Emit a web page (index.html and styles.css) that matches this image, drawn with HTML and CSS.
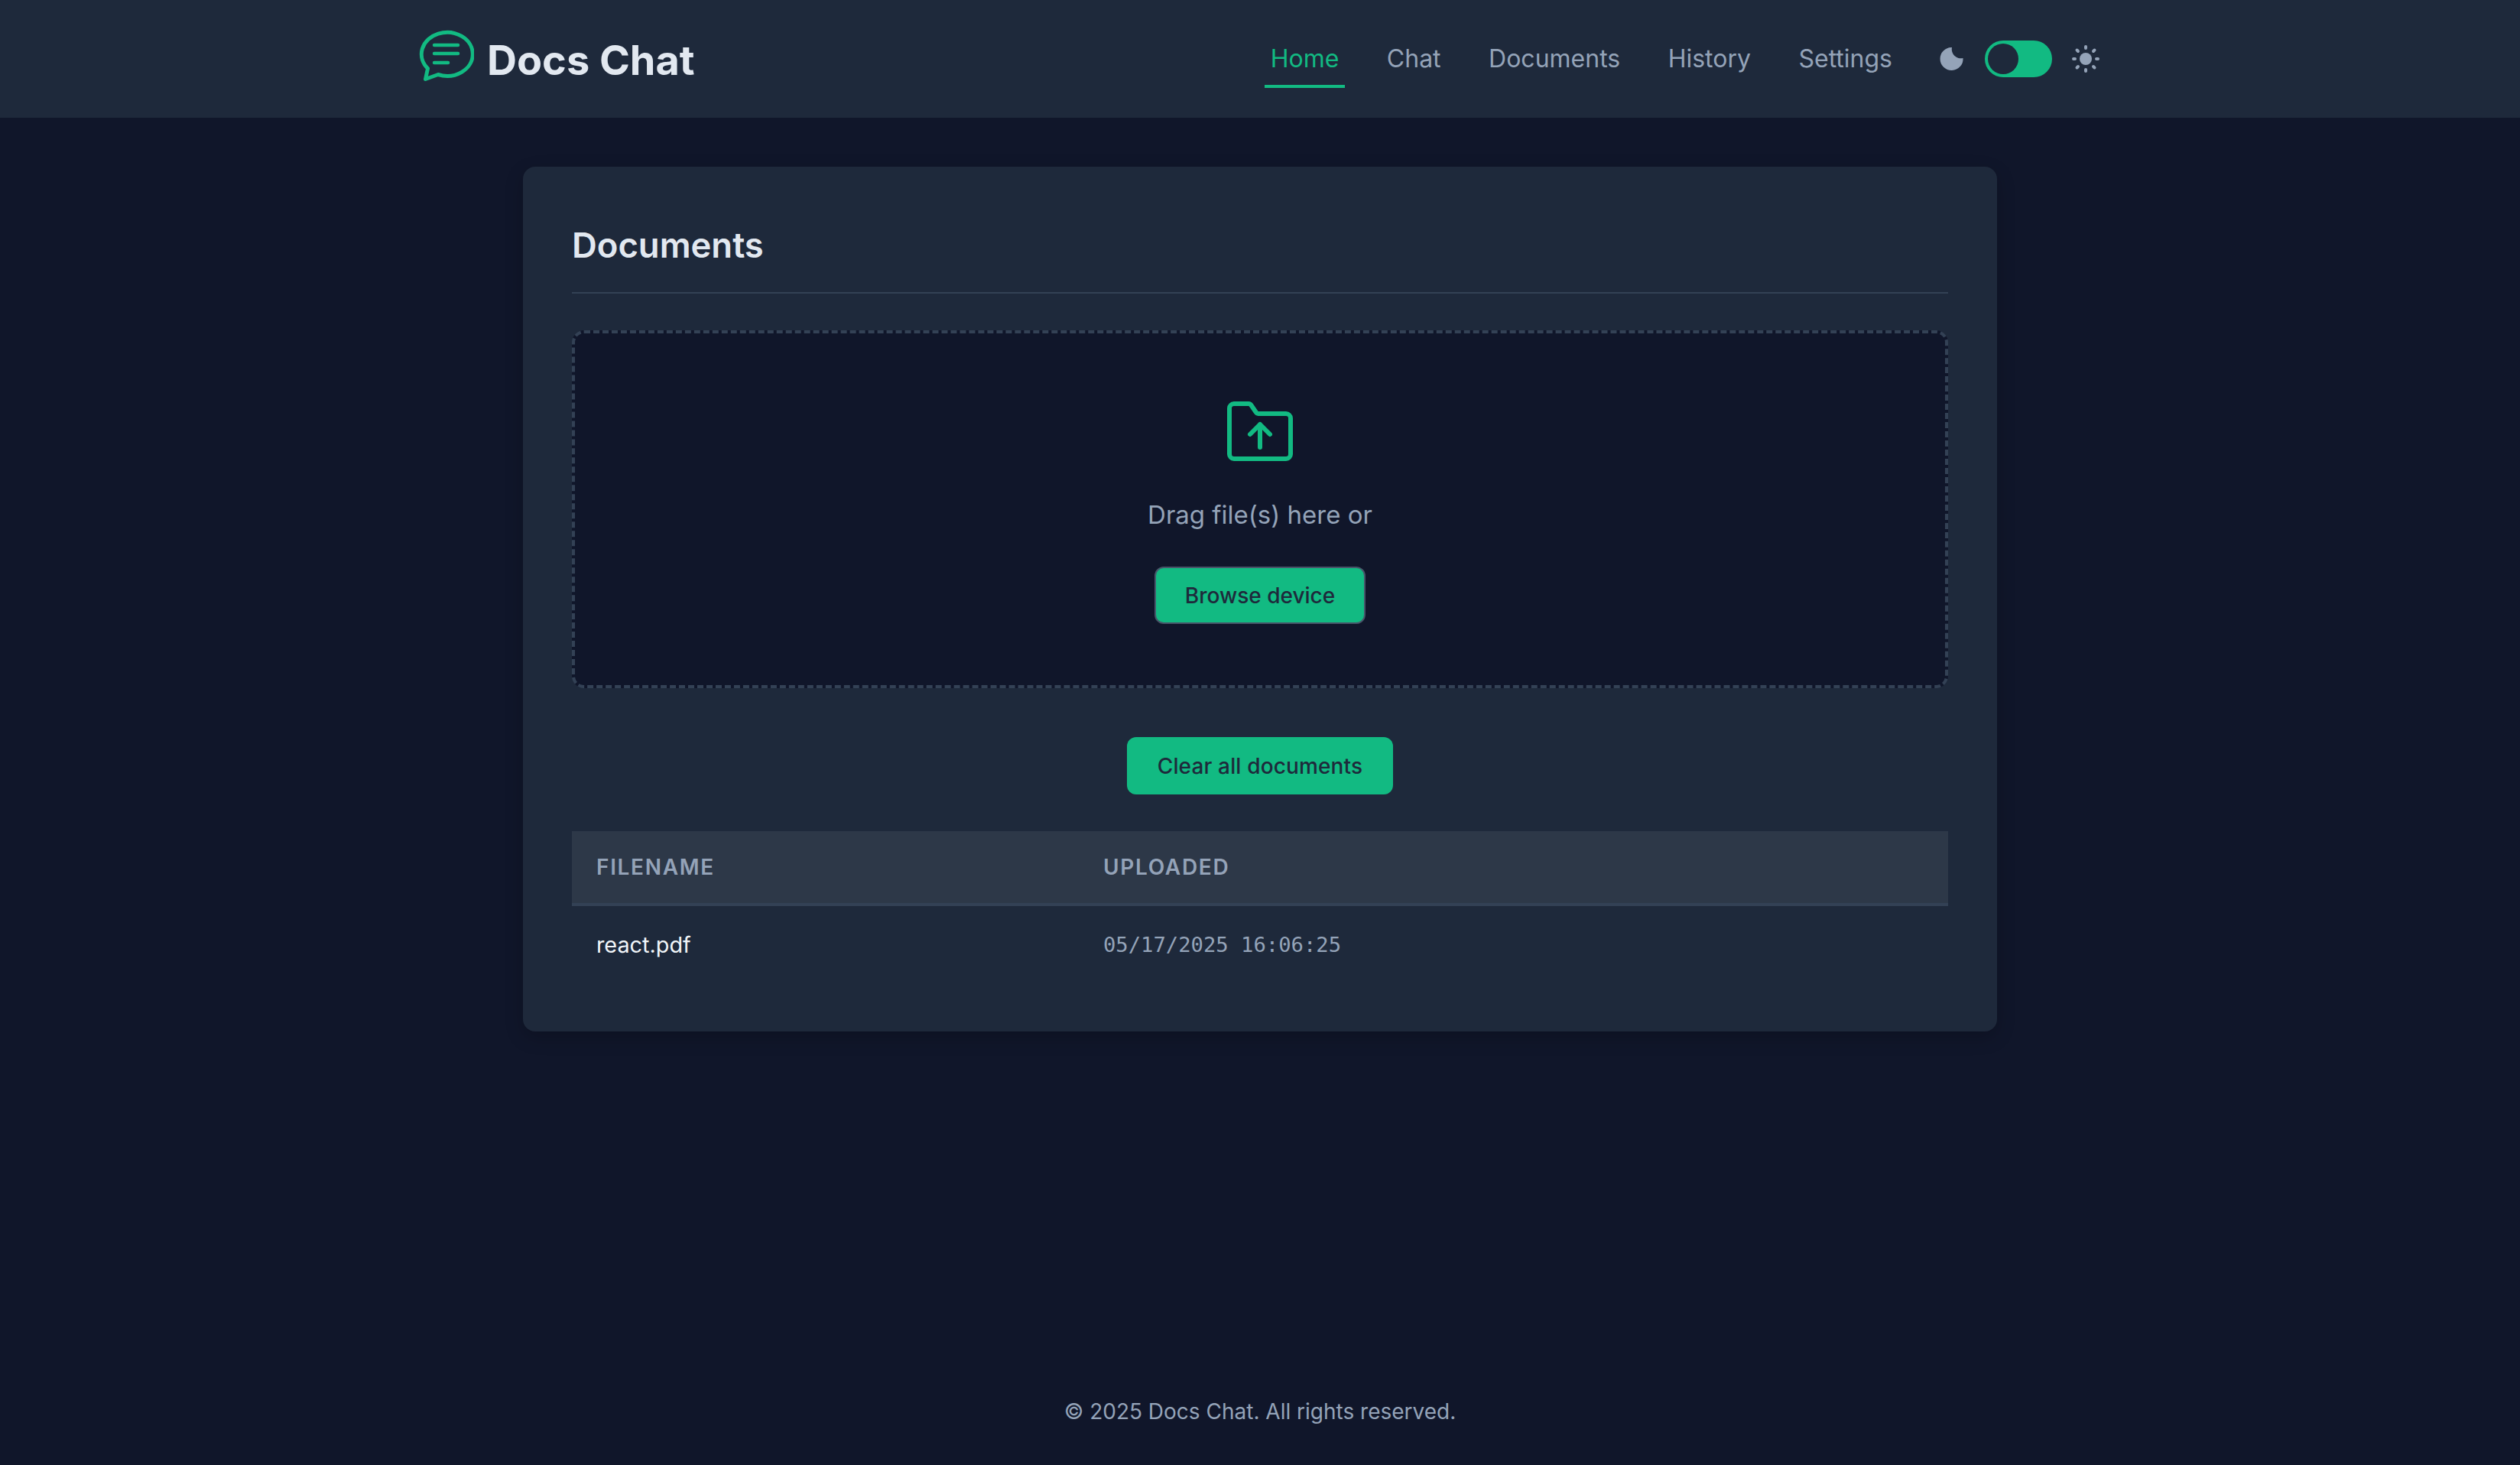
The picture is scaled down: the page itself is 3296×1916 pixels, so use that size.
FILE: index.html
```html
<!DOCTYPE html>
<html lang="en">
<head>
<meta charset="utf-8">
<title>Docs Chat</title>
<link rel="stylesheet" href="styles.css">
</head>
<body>
<header class="topbar">
  <div class="topbar-inner">
    <a class="brand" href="#">
      <svg class="brand-icon" width="72" height="68" viewBox="0 0 72 68" fill="none" stroke="#12ba82" stroke-linecap="round" stroke-linejoin="round">
        <path stroke-width="5" d="M25 58.5A33.5 28.5 0 1 0 11.5 50.5L8.5 64.5Z"/>
        <path stroke-width="4.5" d="M20 20H51M20 31H51M20 43H38"/>
      </svg>
      <span class="brand-name">Docs Chat</span>
    </a>
    <div class="topbar-right">
      <nav class="nav">
        <a class="nav-link active" href="#">Home</a>
        <a class="nav-link" href="#">Chat</a>
        <a class="nav-link" href="#">Documents</a>
        <a class="nav-link" href="#">History</a>
        <a class="nav-link" href="#">Settings</a>
      </nav>
      <div class="theme">
        <svg width="31" height="30" viewBox="0 0 31 30" fill="#94a3b8"><path d="M16 0A15 15 0 1 0 30.5 14A12 12 0 0 1 16 0Z"/></svg>
        <span class="switch"><span class="knob"></span></span>
        <svg class="sun" width="36" height="36" viewBox="-18 -18 36 36" fill="#94a3b8" stroke="#94a3b8" stroke-width="4" stroke-linecap="round">
          <circle r="8" stroke="none"/>
          <path d="M0-16V-14M0 14V16M-16 0H-14M14 0H16M-11.500-11.500L-10-10M10 10L11.500 11.500M-11.500 11.500L-10 10M10-10L11.500-11.500"/>
        </svg>
      </div>
    </div>
  </div>
</header>
<main class="main">
  <section class="card">
    <h1 class="card-title">Documents</h1>
    <div class="dropzone">
      <svg width="86" height="78" viewBox="0 0 86 78" fill="none" stroke="#12ba82" stroke-width="6" stroke-linecap="round" stroke-linejoin="round">
        <path d="M3 9a6 6 0 0 1 6-6H28a4 4 0 0 1 3.500 2L38 14.500a3 3 0 0 0 2.500 1.500H77a6 6 0 0 1 6 6V69a6 6 0 0 1-6 6H9a6 6 0 0 1-6-6Z"/>
        <path d="M43 60V30M30 43L43 30L56 43"/>
      </svg>
      <p class="drop-text">Drag file(s) here or</p>
      <button class="btn btn-outlined">Browse device</button>
    </div>
    <div class="actions"><button class="btn btn-clear">Clear all documents</button></div>
    <table class="files">
      <thead>
        <tr><th class="col-name">Filename</th><th>Uploaded</th></tr>
      </thead>
      <tbody>
        <tr><td class="file-name">react.pdf</td><td class="file-date">05/17/2025 16:06:25</td></tr>
      </tbody>
    </table>
  </section>
</main>
<footer class="footer">© 2025 Docs Chat. All rights reserved.</footer>
</body>
</html>
```
FILE: styles.css
```css
* { box-sizing: border-box; }
html, body { margin: 0; padding: 0; }
body {
  min-height: 100vh;
  display: flex;
  flex-direction: column;
  background: #10162a;
  color: #e2e8f0;
  font-family: Inter, "Liberation Sans", sans-serif;
}
a { text-decoration: none; color: inherit; }

.topbar { background: #1e293b; height: 154px; flex: none; }
.topbar-inner {
  width: 2200px;
  height: 100%;
  margin: 0 auto;
  padding-right: 2px;
  display: flex;
  align-items: center;
  justify-content: space-between;
}
.brand { display: flex; align-items: center; gap: 17px; }
.brand-icon { display: block; margin-bottom: 8px; }
.brand-name { font-size: 54px; font-weight: 700; line-height: 1; margin-top: 4px; color: #e2e8f0; }
.topbar-right { display: flex; align-items: center; gap: 54px; }
.nav { display: flex; gap: 46.5px; }
.nav-link {
  font-size: 32px;
  line-height: 48px;
  padding: 10px 8px;
  border-bottom: 4px solid transparent;
  border-top: 4px solid transparent;
  color: #94a3b8;
}
.nav-link.active { color: #12ba82; border-bottom-color: #12ba82; }
.theme { display: flex; align-items: center; gap: 28px; }
.theme svg { display: block; }
.theme .sun { margin-left: -2px; }
.switch {
  width: 88px;
  height: 48px;
  padding: 4px;
  border-radius: 24px;
  background: #12ba82;
  display: block;
}
.knob { display: block; width: 40px; height: 40px; border-radius: 50%; background: #1e293b; }

.main { flex: 1; padding-top: 64px; }
.card {
  width: 1928px;
  margin: 0 auto;
  padding: 64px;
  background: #1e293b;
  border-radius: 16px;
  box-shadow: 0 8px 24px rgba(0, 0, 0, 0.2);
}
.card-title {
  margin: 0 0 48px;
  padding-bottom: 22px;
  font-size: 45.4px;
  line-height: 78px;
  font-weight: 600;
  color: #e2e8f0;
  border-bottom: 2px solid #334155;
}
.dropzone {
  height: 468px;
  padding-top: 89px;
  display: flex;
  flex-direction: column;
  align-items: center;
  background: #10162a;
  border: 4px dashed #334155;
  border-radius: 16px;
}
.drop-text { margin: 46px 0 44px; font-size: 33px; line-height: 48px; color: #94a3b8; }
.btn {
  font-family: inherit;
  font-size: 28px;
  font-weight: 500;
  line-height: 42px;
  padding: 16px 40px;
  height: 75px;
  border: 0;
  border-radius: 12px;
  background: #12ba82;
  color: #1e293b;
  display: block;
}
.btn-outlined { border: 2px solid #475569; padding: 14px 38px; }
.btn-clear { letter-spacing: 0.15px; }
.actions { display: flex; justify-content: center; margin: 64px 0 48px; }

.files { width: 100%; border-collapse: collapse; table-layout: fixed; }
.files th {
  height: 96px;
  padding: 0 32px;
  text-align: left;
  font-size: 28px;
  font-weight: 600;
  letter-spacing: 0.06em;
  text-transform: uppercase;
  color: #94a3b8;
  background: #2d3848;
  border-bottom: 4px solid #334155;
}
.col-name { width: 663px; }
.files td { height: 102px; padding: 0 32px; font-size: 28.8px; }
.file-name { color: #f1f5f9; }
.files .file-date { font-family: "DejaVu Sans Mono", monospace; font-size: 27.2px; color: #94a3b8; }

.footer {
  flex: none;
  padding: 0 0 49px;
  text-align: center;
  font-size: 28px;
  line-height: 42px;
  color: #94a3b8;
}
```
